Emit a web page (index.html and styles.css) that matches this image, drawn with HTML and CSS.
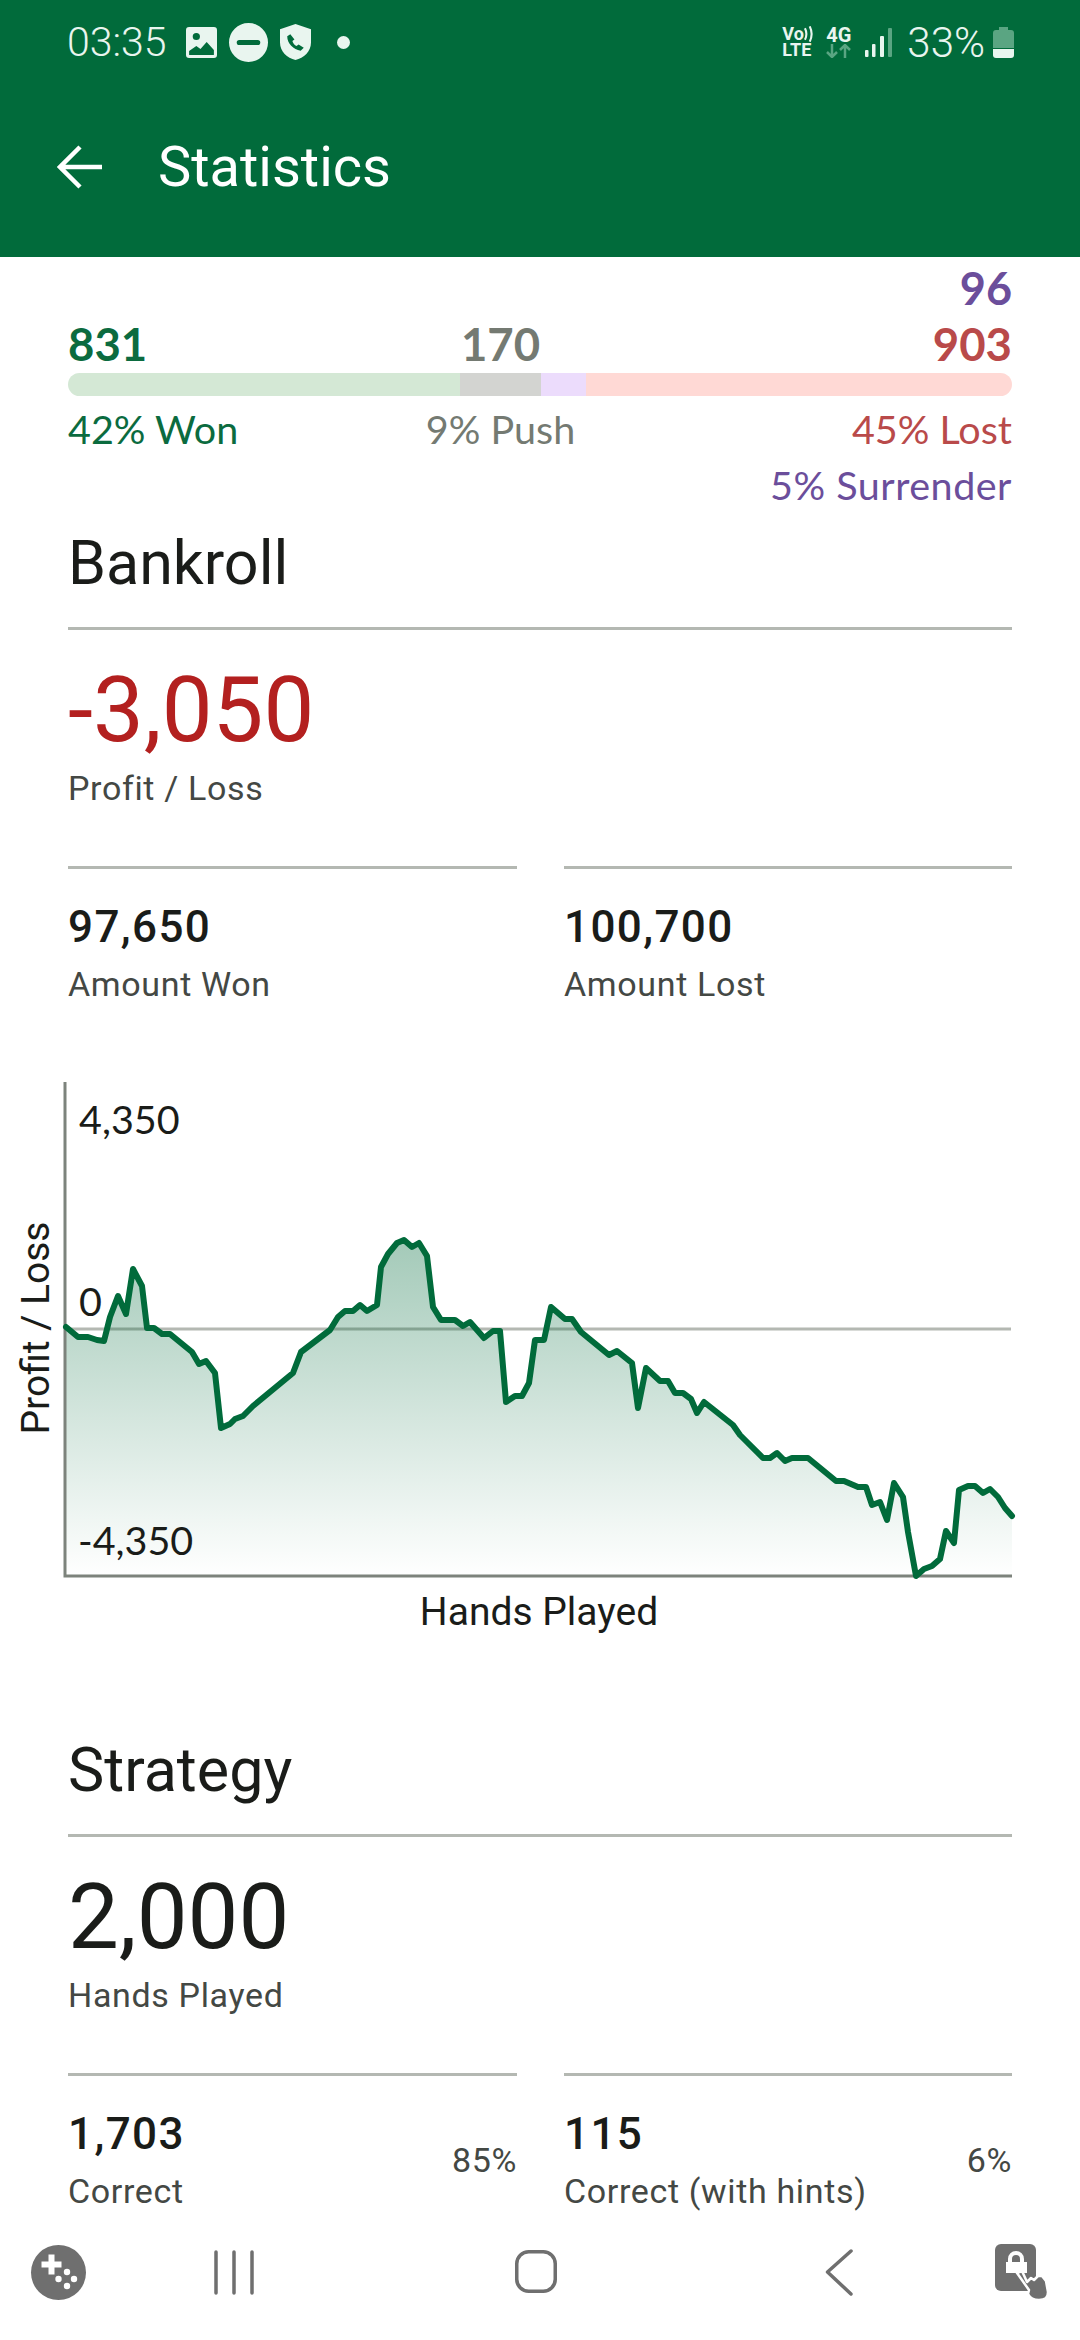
FILE: index.html
```html
<!DOCTYPE html>
<html lang="en">
<head>
<meta charset="utf-8">
<title>Statistics</title>
<link rel="stylesheet" href="styles.css">
</head>
<body>
<div class="phone">
  <header class="header">
    <div class="status">
      <span class="clock">03:35</span>
      <svg class="ic-image" width="31" height="31" viewBox="0 0 30 31" preserveAspectRatio="none"><path fill="#e9f5ef" fill-rule="evenodd" d="M3 0h24a3 3 0 0 1 3 3v25a3 3 0 0 1-3 3H3a3 3 0 0 1-3-3V3a3 3 0 0 1 3-3zM3 24v3.500a.5.5 0 0 0 .5.5h23a.5.5 0 0 0 .5-.5V23l-7-8-6 7-4-3zM10 6a3.500 3.500 0 1 0 0 7 3.500 3.500 0 0 0 0-7z"/></svg>
      <svg class="ic-dnd" width="39" height="39" viewBox="0 0 38 38"><path fill="#e9f5ef" fill-rule="evenodd" d="M19 0a19 19 0 1 1 0 38 19 19 0 0 1 0-38zM10 16.500a2.500 2.500 0 0 0 0 5h18a2.500 2.500 0 0 0 0-5z"/></svg>
      <svg class="ic-shield" width="31" height="36" viewBox="0 0 30 35" preserveAspectRatio="none"><path fill="#e9f5ef" fill-rule="evenodd" d="M15 0l15 5v13c0 9-7 15-15 17C7 33 0 27 0 18V5zM10 10l-3 2c0 7 6 13 13 14l3-3-5-3-2 1.500c-2-1-3.500-3-4-5l2-1.500z"/></svg>
      <span class="dot"></span>
      <span class="status-spacer"></span>
      <div class="volte">
        <div class="volte-top"><span>Vo</span><svg width="11" height="16" viewBox="0 0 11 16"><path d="M1 2q3 6 0 12M6 0q4 8 0 16" fill="none" stroke="#e9f5ef" stroke-width="2.200"/></svg></div>
        <div>LTE</div>
      </div>
      <div class="net4g">
        <div>4G</div>
        <svg width="25" height="14" viewBox="0 0 25 14"><path d="M6 0v13M1 8l5 5 5-5M19 14V1M14 6l5-5 5 5" fill="none" stroke="#5aa582" stroke-width="2.500"/></svg>
      </div>
      <svg class="ic-signal" width="27" height="29" viewBox="0 0 27 29"><rect x="0" y="22" width="3.500" height="7" rx="1" fill="#e9f5ef"/><rect x="7" y="16" width="3.500" height="13" rx="1" fill="#e9f5ef"/><rect x="15" y="8" width="4" height="21" rx="1" fill="#e9f5ef"/><rect x="23" y="0" width="4" height="29" rx="1" fill="#5aa582"/></svg>
      <span class="battery-text">33%</span>
      <svg class="ic-battery" width="21" height="31" viewBox="0 0 21 31"><path fill="#5aa582" d="M6 0h9v3h3a3 3 0 0 1 3 3v15H0V6a3 3 0 0 1 3-3h3z"/><path fill="#e9f5ef" d="M0 22h21v6a3 3 0 0 1-3 3H3a3 3 0 0 1-3-3z"/></svg>
    </div>
    <div class="appbar">
      <svg class="ic-back" width="45" height="44" viewBox="0 0 45 44"><path d="M45 22H4M23 2L3 22 23 42" fill="none" stroke="#fff" stroke-width="4.500"/></svg>
      <h1 class="title">Statistics</h1>
    </div>
  </header>

  <main class="content">
    <section class="summary">
      <div class="surrender-count">96</div>
      <div class="seg-row counts">
        <span class="seg-cell won">831</span>
        <span class="seg-cell center push">170</span>
        <span class="seg-cell end lost">903</span>
      </div>
      <div class="bar">
        <span class="bar-won"></span><span class="bar-push"></span><span class="bar-surrender"></span><span class="bar-lost"></span>
      </div>
      <div class="seg-row percents">
        <span class="seg-cell won">42% Won</span>
        <span class="seg-cell center push">9% Push</span>
        <span class="seg-cell end lost">45% Lost</span>
      </div>
      <div class="surrender-pct">5% Surrender</div>
    </section>

    <section class="block block-bankroll">
      <h2 class="section-title">Bankroll</h2>
      <div class="big-number negative">-3,050</div>
      <div class="label">Profit / Loss</div>
      <div class="pair">
        <div class="cell"><div class="cell-text"><div class="value">97,650</div><div class="label gap">Amount Won</div></div></div>
        <div class="cell"><div class="cell-text"><div class="value">100,700</div><div class="label gap">Amount Lost</div></div></div>
      </div>
    </section>

    <svg class="chart" width="1080" height="590" viewBox="0 1060 1080 590">
      <defs>
        <linearGradient id="area" gradientUnits="userSpaceOnUse" x1="0" y1="1240" x2="0" y2="1576">
          <stop offset="0" stop-color="#016b3b" stop-opacity=".36"/>
          <stop offset="1" stop-color="#016b3b" stop-opacity="0"/>
        </linearGradient>
      </defs>
      <line class="zero" x1="66" y1="1329" x2="1011" y2="1329"/>
      <path fill="url(#area)" d="M66 1327L78 1337 88 1337 97 1340 104 1341 110 1317 118 1296 126 1314 133 1269 142 1286 147 1328 154 1328 162 1334 170 1334 192 1352 199 1364 206 1361 215 1373 221 1428 230 1424 235 1419 243 1416 253 1406 293 1373 301 1352 330 1330 338 1317 345 1311 353 1311 360 1305 367 1311 377 1305 381 1267 388 1254 397 1243 404 1240 412 1247 419 1243 427 1256 433 1307 441 1320 455 1320 463 1326 470 1322 484 1338 493 1331 500 1331 506 1402 515 1396 522 1396 529 1383 535 1340 544 1340 551 1307 565 1319 572 1319 581 1332 609 1355 617 1351 632 1363 638 1408 646 1368 660 1381 668 1381 675 1393 683 1393 691 1399 697 1413 704 1402 733 1425 740 1435 748 1443 763 1458 770 1458 777 1453 785 1461 792 1458 808 1458 836 1481 844 1481 858 1487 866 1487 872 1505 880 1502 887 1520 894 1483 903 1497 908 1532 916 1576 924 1569 932 1566 940 1559 946 1531 954 1543 959 1490 968 1486 975 1486 983 1493 990 1489 998 1497 1005 1508 1012 1516V1576H66z"/>
      <path class="axis" d="M65 1082V1576H1012"/>
      <polyline class="line" points="66,1327 78,1337 88,1337 97,1340 104,1341 110,1317 118,1296 126,1314 133,1269 142,1286 147,1328 154,1328 162,1334 170,1334 192,1352 199,1364 206,1361 215,1373 221,1428 230,1424 235,1419 243,1416 253,1406 293,1373 301,1352 330,1330 338,1317 345,1311 353,1311 360,1305 367,1311 377,1305 381,1267 388,1254 397,1243 404,1240 412,1247 419,1243 427,1256 433,1307 441,1320 455,1320 463,1326 470,1322 484,1338 493,1331 500,1331 506,1402 515,1396 522,1396 529,1383 535,1340 544,1340 551,1307 565,1319 572,1319 581,1332 609,1355 617,1351 632,1363 638,1408 646,1368 660,1381 668,1381 675,1393 683,1393 691,1399 697,1413 704,1402 733,1425 740,1435 748,1443 763,1458 770,1458 777,1453 785,1461 792,1458 808,1458 836,1481 844,1481 858,1487 866,1487 872,1505 880,1502 887,1520 894,1483 903,1497 908,1532 916,1576 924,1569 932,1566 940,1559 946,1531 954,1543 959,1490 968,1486 975,1486 983,1493 990,1489 998,1497 1005,1508 1012,1516"/>
      <text class="tick" x="79" y="1134">4,350</text>
      <text class="tick" x="79" y="1316">0</text>
      <text class="tick" x="78" y="1555">-4,350</text>
      <text class="axis-title" x="539" y="1625" text-anchor="middle">Hands Played</text>
      <text class="axis-title" transform="translate(49 1328) rotate(-90)" text-anchor="middle">Profit / Loss</text>
    </svg>

    <section class="block block-strategy">
      <h2 class="section-title">Strategy</h2>
      <div class="big-number">2,000</div>
      <div class="label">Hands Played</div>
      <div class="pair">
        <div class="cell"><div class="cell-text"><div class="value">1,703</div><div class="label gap">Correct</div></div><div class="pct">85%</div></div>
        <div class="cell"><div class="cell-text"><div class="value">115</div><div class="label gap">Correct (with hints)</div></div><div class="pct">6%</div></div>
      </div>
    </section>
  </main>

  <nav class="nav">
    <svg class="nav-game" width="56" height="60" viewBox="0 0 56 60"><ellipse cx="28.500" cy="30.500" rx="27.500" ry="27.500" fill="#6f6f6f"/><path fill="#fff" d="M18.500 12.500h6v7h7v6h-7v7h-6v-7h-7v-6h7z"/><circle cx="37" cy="30" r="3.200" fill="#fff"/><circle cx="28.500" cy="37" r="3.200" fill="#fff"/><circle cx="44" cy="37" r="3.200" fill="#fff"/><circle cx="37" cy="44" r="3.200" fill="#fff"/></svg>
    <svg class="nav-recents" width="42" height="60" viewBox="0 0 42 60"><path d="M3 10v41M21 10v41M39 10v41" fill="none" stroke="#6f6f6f" stroke-width="3.500" stroke-linecap="round"/></svg>
    <svg class="nav-home" width="46" height="60" viewBox="0 0 46 60"><rect x="3.750" y="9.750" width="38.500" height="39.500" rx="12" fill="none" stroke="#6f6f6f" stroke-width="3.500"/></svg>
    <svg class="nav-back" width="28" height="60" viewBox="0 0 28 60"><path d="M26 9L2.500 30 26 52" fill="none" stroke="#6f6f6f" stroke-width="3.500" stroke-linecap="round" stroke-linejoin="round"/></svg>
    <svg class="nav-lock" width="56" height="60" viewBox="0 0 56 60"><rect x="0" y="2" width="41" height="47" rx="6" fill="#6f6f6f"/><path fill="#fff" d="M13 20v-3a8 8 0 0 1 16 0v3h3v11H11V20zM17 20h8v-3a4 4 0 0 0-8 0z"/><path fill="#6f6f6f" stroke="#fff" stroke-width="2.500" stroke-linejoin="round" d="M22 31l5-2 5 11 4-4 3 2 4-4 4 0 4 5 2 11c0 6-3 8-9 8-5 0-9-2-11-6l1-4z"/></svg>
  </nav>
</div>
</body>
</html>
```
FILE: styles.css
```css
* { box-sizing: border-box; }
html, body { margin: 0; padding: 0; background: #fff; }
body { font-family: Roboto, sans-serif; }
.phone { width: 1080px; height: 2340px; display: flex; flex-direction: column; overflow: hidden; background: #fff; }

.header { height: 257px; flex: none; background: #016b3b; color: #e9f5ef; }
.status { height: 56px; margin-top: 14px; padding: 0 66px 0 67px; display: flex; align-items: center; }
.clock { font-size: 41px; font-weight: 300; width: 102px; line-height: 56px; white-space: nowrap; }
.ic-image { margin-left: 17px; }
.ic-dnd, .ic-shield { margin-left: 12px; }
.dot { width: 13px; height: 13px; border-radius: 50%; background: #e9f5ef; margin-left: 26px; }
.status-spacer { flex: 1; }
.volte, .net4g { display: flex; flex-direction: column; font-weight: 700; white-space: nowrap; }
.volte { width: 32px; font-size: 18px; line-height: 16px; }
.volte-top { display: flex; align-items: center; }
.net4g { width: 25px; margin-left: 12px; font-size: 20px; line-height: 18px; }
.ic-signal { margin-left: 14px; }
.battery-text { font-size: 42px; font-weight: 300; margin-left: 15px; white-space: nowrap; }
.ic-battery { margin-left: 8px; }
.appbar { display: flex; align-items: center; height: 64px; margin-top: 65px; padding-left: 57px; }
.title { margin: 0 0 0 56px; font-size: 56px; font-weight: 400; line-height: 64px; color: #fff; }

.content { flex: 1; min-height: 0; overflow: hidden; }

.summary { padding: 6px 68px 0; font-family: Lato, sans-serif; }
.surrender-count { font-size: 45px; font-weight: 700; line-height: 50px; text-align: right; color: #6b4e9b; }
.seg-row { display: grid; grid-template-columns: 392px 81px 1fr; }
.seg-cell { display: flex; white-space: nowrap; }
.seg-cell.center { justify-content: center; }
.seg-cell.end { justify-content: flex-end; }
.counts { margin-top: 6px; font-size: 45.500px; font-weight: 700; line-height: 50px; }
.percents { margin-top: 5px; font-size: 39.500px; line-height: 56px; }
.won { color: #0b6b3f; }
.push { color: #747a72; }
.lost { color: #b94a4a; }
.surrender-pct { font-size: 39.500px; letter-spacing: .5px; line-height: 56px; text-align: right; color: #6b4e9b; }
.bar { display: flex; height: 23px; margin-top: 4px; border-radius: 12px; overflow: hidden; }
.bar-won { width: 392px; background: #d4e8d5; }
.bar-push { width: 81px; background: #d3d4d1; }
.bar-surrender { width: 45px; background: #ecdcfc; }
.bar-lost { flex: 1; background: #ffd9d5; }

.block { padding: 0 68px; color: #1a1c19; }
.block-bankroll { margin-top: 14px; }
.block-strategy { margin-top: 84px; }
.section-title { margin: 0; padding-bottom: 28px; border-bottom: 3px solid #b4b8b2; font-size: 61px; font-weight: 400; line-height: 72px; }
.big-number { margin-top: 25px; font-size: 90.500px; line-height: 110px; }
.negative { color: #b3201f; }
.label { margin-top: 1px; font-size: 34px; line-height: 44px; letter-spacing: .65px; color: #444844; white-space: nowrap; }
.label.gap { margin-top: 7px; }
.pair { display: grid; grid-template-columns: 449px 448px; column-gap: 47px; margin-top: 56px; }
.cell { display: flex; justify-content: space-between; border-top: 3px solid #b4b8b2; padding-top: 30px; }
.value { font-size: 44px; font-weight: 500; line-height: 56px; letter-spacing: 1.400px; }
.pct { font-size: 34px; line-height: 44px; letter-spacing: .65px; color: #444844; margin-top: 32px; }

.chart { display: block; margin-top: 54px; }
.zero { stroke: #b4b8b2; stroke-width: 3; }
.axis { fill: none; stroke: #7d837c; stroke-width: 3; }
.line { fill: none; stroke: #016b3b; stroke-width: 6; stroke-linejoin: round; stroke-linecap: round; }
.tick { font: 400 39.500px Lato, sans-serif; fill: #1a1c19; }
.axis-title { font: 400 39px Roboto, sans-serif; fill: #1a1c19; }

.nav { height: 120px; flex: none; display: flex; align-items: flex-start; padding: 22px 0 0 30px; background: #fff; }
.nav-recents { margin-left: 127px; }
.nav-home { margin-left: 258px; }
.nav-back { margin-left: 266px; }
.nav-lock { margin-left: 142px; }
```
